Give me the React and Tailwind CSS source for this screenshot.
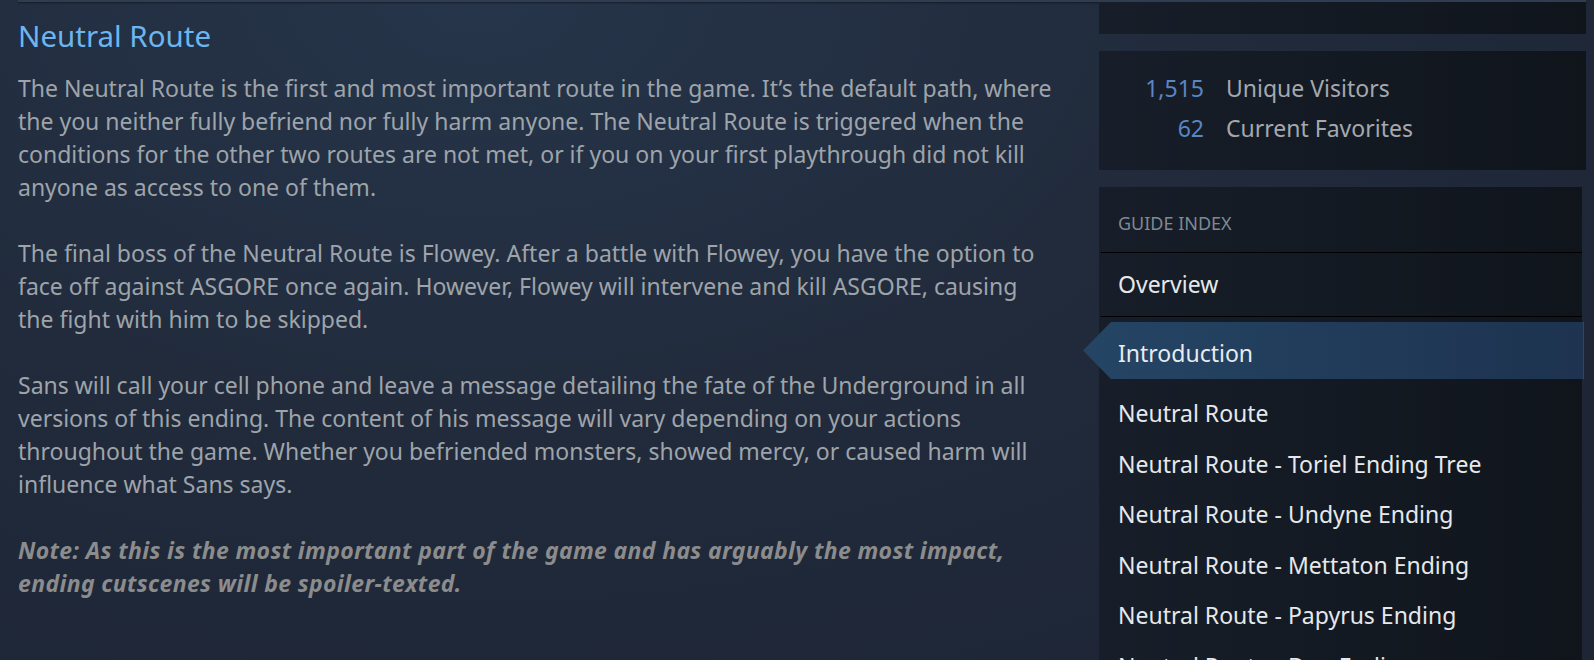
import React from 'react';

const paragraphs = [
  [
    'The Neutral Route is the first and most important route in the game. It\u2019s the default path, where',
    'the you neither fully befriend nor fully harm anyone. The Neutral Route is triggered when the',
    'conditions for the other two routes are not met, or if you on your first playthrough did not kill',
    'anyone as access to one of them.',
  ],
  [
    'The final boss of the Neutral Route is Flowey. After a battle with Flowey, you have the option to',
    'face off against ASGORE once again. However, Flowey will intervene and kill ASGORE, causing',
    'the fight with him to be skipped.',
  ],
  [
    'Sans will call your cell phone and leave a message detailing the fate of the Underground in all',
    'versions of this ending. The content of his message will vary depending on your actions',
    'throughout the game. Whether you befriended monsters, showed mercy, or caused harm will',
    'influence what Sans says.',
  ],
];

const note = [
  'Note: As this is the most important part of the game and has arguably the most impact,',
  'ending cutscenes will be spoiler-texted.',
];

const indexItems = [
  'Neutral Route',
  'Neutral Route - Toriel Ending Tree',
  'Neutral Route - Undyne Ending',
  'Neutral Route - Mettaton Ending',
  'Neutral Route - Papyrus Ending',
  'Neutral Route - Dog Ending',
];

const App = () => {
  return (
    <div className="w-[1594px] h-[660px] overflow-hidden flex flex-col bg-[#1f2838] bg-[radial-gradient(ellipse_at_30%_0%,#26354a_0%,#212b3c_45%,#1e2636_85%)] font-['Noto_Sans',sans-serif]">
      {/* bottom edge of the block above */}
      <div className="ml-[18px] w-[1568px] h-[2px] shrink-0 bg-[#2f3d52] shadow-[0_1px_2px_rgba(0,0,0,0.45)]" />

      <div className="flex flex-1 min-h-0">
        {/* --- GUIDE BODY --- */}
        <div className="w-[1099px] shrink-0 pl-[18px] pt-[16px]">
          <h2 className="text-[29.5px] leading-[36px] text-[#6cb6ef] font-normal">Neutral Route</h2>
          <div className="mt-[18px] text-[23px] leading-[33px] text-[#9ea4aa]">
            {paragraphs.map((p, i) => (
              <div key={i} className="mb-[33px]">
                {p.map((line, j) => (
                  <div key={j} className="whitespace-nowrap">{line}</div>
                ))}
              </div>
            ))}
            <div className="font-bold italic text-[#8c8c8c] tracking-[0.35px]">
              {note.map((line, j) => (
                <div key={j} className="whitespace-nowrap">{line}</div>
              ))}
            </div>
          </div>
        </div>

        {/* --- SIDEBAR --- */}
        <div className="w-[487px] shrink-0 flex flex-col gap-[17px]">
          <div className="h-[32px] shrink-0 bg-gradient-to-r from-[#171e29] to-[#10151c]" />

          <div className="h-[119px] shrink-0 pt-[17px] bg-gradient-to-r from-[#171e29] to-[#10151c] text-[23px] leading-[40px]">
            {[['1,515', 'Unique Visitors'], ['62', 'Current Favorites']].map(([n, label]) => (
              <div key={label} className="flex gap-[22px]">
                <span className="w-[105px] text-right text-[#5b86c1]">{n}</span>
                <span className="text-[#a3a9af]">{label}</span>
              </div>
            ))}
          </div>

          <div className="w-[483px] shrink-0 bg-gradient-to-r from-[#171e29] to-[#10151c] pb-[20px]">
            <div className="pt-[25px] pb-[18px] pl-[19px] text-[18px] leading-[22px] uppercase text-[#7f8993]">
              Guide Index
            </div>
            <div className="ml-[2px] h-px bg-black" />
            <div className="h-[63px] flex items-center pl-[19px] text-[23px] text-[#e6e9ec]">Overview</div>
            <div className="ml-[2px] h-px bg-black" />

            <div className="mt-[5px] -ml-[16px] w-[501px] h-[57px] flex items-center pl-[35px] pt-[5px] text-[23px] text-[#e9ecef] bg-gradient-to-r from-[#254565] to-[#1d334f] border-r border-[#2b4868] [clip-path:polygon(28px_0,100%_0,100%_100%,28px_100%,0_50%)]">
              Introduction
            </div>

            <div className="mt-[9px]">
              {indexItems.map((item) => (
                <div key={item} className="h-[50.5px] flex items-center pl-[19px] text-[23px] text-[#e6e9ec] whitespace-nowrap">
                  {item}
                </div>
              ))}
            </div>
          </div>
        </div>
      </div>
    </div>
  );
};

export default App;
